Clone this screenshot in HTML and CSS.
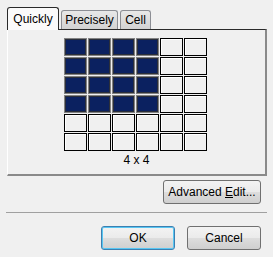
FILE: index.html
```html
<!DOCTYPE html>
<html lang="en">
<head>
  <meta charset="UTF-8" />
  <title>Table Size</title>
  <link rel="stylesheet" href="styles.css">
</head>
<body>
  <div class="dialog">
    <div class="tabs">
      <div class="tab active tab-quickly">Quickly</div>
      <div class="tab tab-precisely">Precisely</div>
      <div class="tab tab-cell">Cell</div>
    </div>

    <div class="panel">
      <div class="grid">
        <div class="cell on"></div><div class="cell on"></div><div class="cell on"></div><div class="cell on"></div><div class="cell"></div><div class="cell"></div>
        <div class="cell on"></div><div class="cell on"></div><div class="cell on"></div><div class="cell on"></div><div class="cell"></div><div class="cell"></div>
        <div class="cell on"></div><div class="cell on"></div><div class="cell on"></div><div class="cell on"></div><div class="cell"></div><div class="cell"></div>
        <div class="cell on"></div><div class="cell on"></div><div class="cell on"></div><div class="cell on"></div><div class="cell"></div><div class="cell"></div>
        <div class="cell"></div><div class="cell"></div><div class="cell"></div><div class="cell"></div><div class="cell"></div><div class="cell"></div>
        <div class="cell"></div><div class="cell"></div><div class="cell"></div><div class="cell"></div><div class="cell"></div><div class="cell"></div>
      </div>
      <div class="size">4 x 4</div>
    </div>

    <div class="adv-row">
      <button class="btn btn-adv">Advanced <u>E</u>dit...</button>
    </div>

    <div class="separator"></div>

    <div class="actions">
      <button class="btn btn-default">OK</button>
      <button class="btn">Cancel</button>
    </div>
  </div>
</body>
</html>
```

FILE: styles.css
```css
body {
  margin: 0;
  background: #f0f0f0;
  font-family: "Liberation Sans", Arial, sans-serif;
  font-size: 12px;
  color: #000;
}

.dialog {
  width: 273px;
  height: 257px;
  box-sizing: border-box;
  padding: 7px 0 0 7px;
}

.tabs {
  display: flex;
  align-items: flex-end;
  height: 23px;
  margin-bottom: -1px;
  position: relative;
  z-index: 1;
}

.tab {
  height: 19px;
  box-sizing: border-box;
  border: 1px solid #8c8e94;
  border-bottom: none;
  border-radius: 3px 3px 0 0;
  background: linear-gradient(#e8e8e8, #d2d2d2);
  text-align: center;
  line-height: 18px;
  margin-bottom: 1px;
}

.tab.active {
  height: 23px;
  margin-bottom: 0;
  border-color: #2a2a2a;
  background: #fafafa;
  line-height: 22px;
}

.tab-quickly {
  width: 52px;
}

.tab-precisely {
  width: 57px;
  margin-left: 2px;
}

.tab-cell {
  width: 31px;
  margin-left: 2px;
}

.panel {
  width: 260px;
  height: 147px;
  box-sizing: border-box;
  border-top: 1px solid #2a2a2a;
  border-left: 1px solid #ffffff;
  border-right: 2px solid #8a8a8a;
  border-bottom: 2px solid #8a8a8a;
  padding-top: 8px;
}

.grid {
  display: grid;
  grid-template-columns: repeat(6, 23px);
  grid-auto-rows: 18px;
  gap: 1px;
  width: 143px;
  margin-left: 56px;
}

.cell {
  box-sizing: border-box;
  border: 1px solid #000;
  background: #f0f0f0;
  box-shadow: inset 1px 1px 0 #ffffff;
}

.cell.on {
  border-color: #828282;
  background: #0b2160;
  box-shadow: inset 0 0 0 1px #2b2f3a;
}

.size {
  text-align: center;
  margin-top: 2px;
  line-height: 14px;
}

.adv-row {
  width: 260px;
  display: flex;
  justify-content: flex-end;
  padding-right: 6px;
  box-sizing: border-box;
  margin-top: 4px;
}

.btn {
  height: 24px;
  box-sizing: border-box;
  border: 1px solid #707070;
  border-radius: 3px;
  background: linear-gradient(#f3f3f3 0%, #ebebeb 48%, #dddddd 52%, #cfcfcf 100%);
  font-family: "Liberation Sans", Arial, sans-serif;
  font-size: 12px;
  color: #000;
  padding: 0;
  width: 74px;
}

.btn-adv {
  width: 98px;
}

.btn-default {
  border-color: #3c7fb1;
  box-shadow: inset 0 0 0 1px #58c6f2;
}

.separator {
  width: 261px;
  margin-left: -1px;
  margin-top: 8px;
  border-top: 1px solid #a0a0a0;
}

.actions {
  width: 260px;
  display: flex;
  justify-content: flex-end;
  gap: 12px;
  padding-right: 6px;
  box-sizing: border-box;
  margin-top: 13px;
}
```
